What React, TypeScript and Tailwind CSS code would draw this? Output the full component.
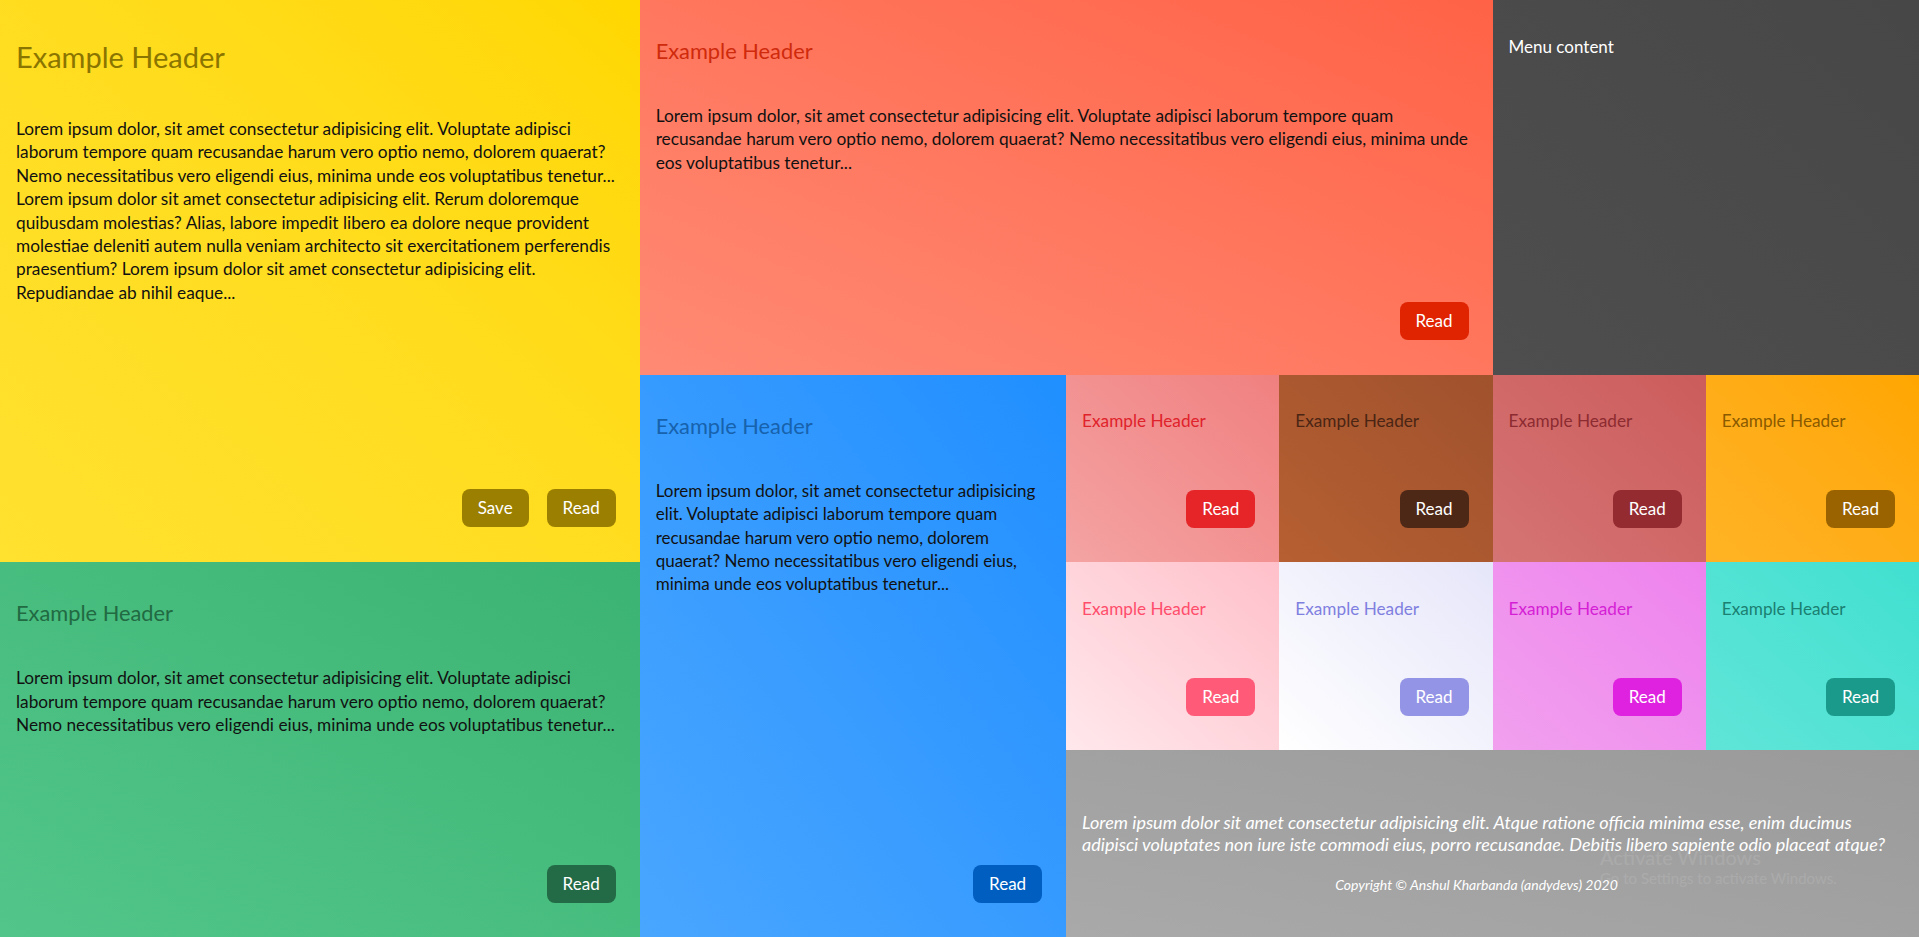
import type { ReactNode } from 'react';

const LOREM_LONG =
  'Lorem ipsum dolor, sit amet consectetur adipisicing elit. Voluptate adipisci laborum tempore quam recusandae harum vero optio nemo, dolorem quaerat? Nemo necessitatibus vero eligendi eius, minima unde eos voluptatibus tenetur... Lorem ipsum dolor sit amet consectetur adipisicing elit. Rerum doloremque quibusdam molestias? Alias, labore impedit libero ea dolore neque provident molestiae deleniti autem nulla veniam architecto sit exercitationem perferendis praesentium? Lorem ipsum dolor sit amet consectetur adipisicing elit. Repudiandae ab nihil eaque...';

const LOREM =
  'Lorem ipsum dolor, sit amet consectetur adipisicing elit. Voluptate adipisci laborum tempore quam recusandae harum vero optio nemo, dolorem quaerat? Nemo necessitatibus vero eligendi eius, minima unde eos voluptatibus tenetur...';

function Btn({ className, children }: { className: string; children: ReactNode }) {
  return (
    <button className={`rounded-lg px-4 py-2 text-[17px] leading-[22px] text-white ${className}`}>
      {children}
    </button>
  );
}

function Tile({ bg, head, btn }: { bg: string; head: string; btn: string }) {
  return (
    <div className={`flex flex-col p-4 ${bg}`}>
      <h3 className={`my-[18.7px] text-[17.2px] leading-[23px] ${head}`}>Example Header</h3>
      <div className="mt-auto mb-[18px] mr-2 flex justify-end">
        <Btn className={btn}>Read</Btn>
      </div>
    </div>
  );
}

export default function App() {
  return (
    <div
      className="relative grid h-[937px] w-full grid-cols-9 grid-rows-5 overflow-hidden"
      style={{ fontFamily: 'Lato, "Open Sans", sans-serif' }}
    >
      {/* big yellow card */}
      <div className="col-span-3 col-start-1 row-span-3 row-start-1 flex flex-col bg-linear-to-tr from-[#ffe12f] to-[#ffd800] p-4">
        <h1 className="my-[21.4px] text-[29px] leading-[39px] text-[#8a7500]">Example Header</h1>
        <p className="my-[19.2px] text-[17.25px] leading-[23.4px] text-[#111]">{LOREM_LONG}</p>
        <div className="mt-auto mb-[19px] mr-2 flex justify-end gap-[18px]">
          <Btn className="bg-[#9b7f00]">Save</Btn>
          <Btn className="bg-[#9b7f00]">Read</Btn>
        </div>
      </div>

      {/* red card */}
      <div className="col-span-4 col-start-4 row-span-2 row-start-1 flex flex-col bg-linear-to-tr from-[#ff8a74] to-[#ff6246] p-4">
        <h2 className="my-[19.9px] text-[21.8px] leading-[29px] text-[#cf2a0c]">Example Header</h2>
        <p className="my-[19.2px] text-[17.3px] leading-[23.4px] text-[#111]">{LOREM}</p>
        <div className="mt-auto mb-[19px] mr-2 flex justify-end">
          <Btn className="bg-[#e02300]">Read</Btn>
        </div>
      </div>

      {/* menu */}
      <div className="col-span-2 col-start-8 row-span-2 row-start-1 bg-linear-to-tr from-[#4e4e4e] to-[#474747] p-4">
        <p className="my-[19px] text-[17px] leading-[23px] text-white">Menu content</p>
      </div>

      {/* blue card */}
      <div className="col-span-2 col-start-4 row-span-3 row-start-3 flex flex-col bg-linear-to-tr from-[#49a6ff] to-[#1f8fff] p-4">
        <h2 className="my-[19.9px] text-[21.8px] leading-[29px] text-[#1762ad]">Example Header</h2>
        <p className="my-[19.2px] text-[17px] leading-[23.4px] text-[#111]">{LOREM}</p>
        <div className="mt-auto mb-[18px] mr-2 flex justify-end">
          <Btn className="bg-[#005ec0]">Read</Btn>
        </div>
      </div>

      {/* small tiles, row 3 */}
      <div className="col-start-6 row-start-3 grid">
        <Tile bg="bg-linear-to-tr from-[#f4a3a3] to-[#f08080]" head="text-[#e0222b]" btn="bg-[#e52528]" />
      </div>
      <div className="col-start-7 row-start-3 grid">
        <Tile bg="bg-linear-to-tr from-[#b65f32] to-[#a0522d]" head="text-[#4a2514]" btn="bg-[#4e2816]" />
      </div>
      <div className="col-start-8 row-start-3 grid">
        <Tile bg="bg-linear-to-tr from-[#d57474] to-[#cc5c5c]" head="text-[#8c2b30]" btn="bg-[#932b30]" />
      </div>
      <div className="col-start-9 row-start-3 grid">
        <Tile bg="bg-linear-to-tr from-[#ffb324] to-[#ffa600]" head="text-[#8a5a00]" btn="bg-[#9a6300]" />
      </div>

      {/* green card */}
      <div className="col-span-3 col-start-1 row-span-2 row-start-4 flex flex-col bg-linear-to-tr from-[#52c68a] to-[#3bb372] p-4">
        <h2 className="my-[19.9px] text-[21.8px] leading-[29px] text-[#216a42]">Example Header</h2>
        <p className="my-[19.2px] text-[17.25px] leading-[23.4px] text-[#111]">{LOREM}</p>
        <div className="mt-auto mb-[18px] mr-2 flex justify-end">
          <Btn className="bg-[#236b46]">Read</Btn>
        </div>
      </div>

      {/* small tiles, row 4 */}
      <div className="col-start-6 row-start-4 grid">
        <Tile bg="bg-linear-to-tr from-[#ffe8ec] to-[#ffc0ca]" head="text-[#ff4d6b]" btn="bg-[#ff5b79]" />
      </div>
      <div className="col-start-7 row-start-4 grid">
        <Tile bg="bg-linear-to-tr from-[#ffffff] to-[#e6e6fa]" head="text-[#7f7fe0]" btn="bg-[#9494e6]" />
      </div>
      <div className="col-start-8 row-start-4 grid">
        <Tile bg="bg-linear-to-tr from-[#f1a0ee] to-[#ee82ee]" head="text-[#d41fd4]" btn="bg-[#df22df]" />
      </div>
      <div className="col-start-9 row-start-4 grid">
        <Tile bg="bg-linear-to-tr from-[#5fe5d8] to-[#40e0d0]" head="text-[#1b7f71]" btn="bg-[#1a9a8b]" />
      </div>

      {/* footer */}
      <div className="col-span-4 col-start-6 row-start-5 flex flex-col bg-linear-to-tr from-[#a9a9a9] to-[#9a9a9a] px-4 pt-[61px] text-white italic">
        <p className="text-[18.05px] leading-[22px]">
          Lorem ipsum dolor sit amet consectetur adipisicing elit. Atque ratione officia minima esse, enim ducimus
          adipisci voluptates non iure iste commodi eius, porro recusandae. Debitis libero sapiente odio placeat atque?
        </p>
        <p className="mt-[20px] pr-8 text-center text-[14px] leading-[20px]">
          Copyright © Anshul Kharbanda (andydevs) 2020
        </p>
      </div>

      {/* windows watermark overlay */}
      <div className="pointer-events-none absolute left-[1600px] top-[847px] text-white/10">
        <p className="text-[20px] leading-[20px]">Activate Windows</p>
        <p className="mt-[2px] text-[15px] leading-[18px]">Go to Settings to activate Windows.</p>
      </div>
    </div>
  );
}
